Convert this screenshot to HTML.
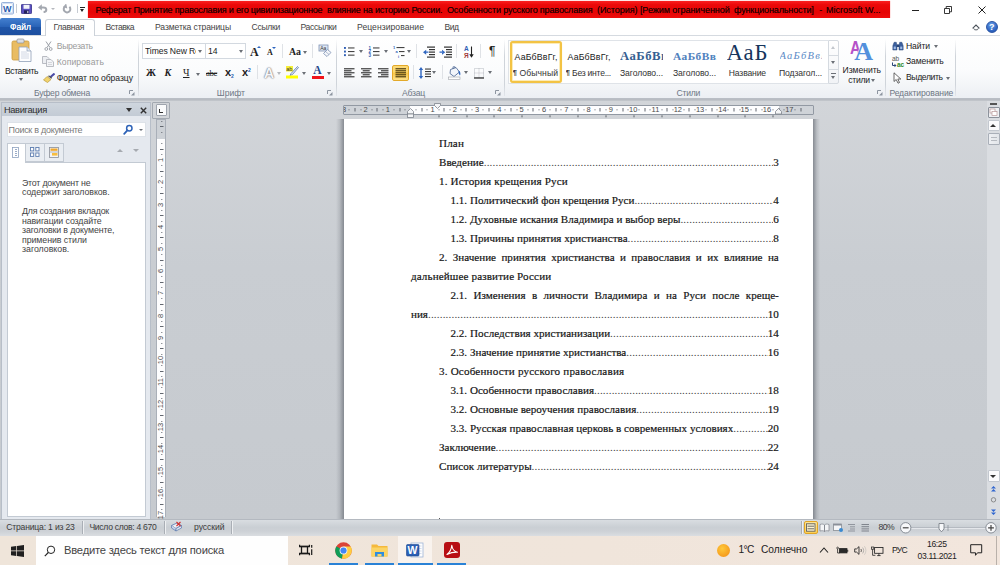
<!DOCTYPE html>
<html lang="ru">
<head>
<meta charset="utf-8">
<title>Реферат - Microsoft Word</title>
<style>
*{box-sizing:border-box;margin:0;padding:0}
html,body{width:1000px;height:565px;overflow:hidden;background:#fff}
body{position:relative;font-family:"Liberation Sans","DejaVu Sans",sans-serif;font-size:8.5px;color:#333;line-height:1}
.a{position:absolute;white-space:nowrap}
/* title bar */
#titlebar{left:0;top:0;width:1000px;height:18px;background:#fff}
#redtitle{left:87.5px;top:1px;width:802px;height:16.5px;background:linear-gradient(#fa2020 0%,#ec0909 22%,#e50404 65%,#ee0c0c 100%);overflow:hidden;box-shadow:0 0 1px rgba(255,60,60,0.8)}
.tt{font-size:9px;color:#210000;text-shadow:0 0 0.4px rgba(40,0,0,0.7)}
/* tabs */
#tabrow{left:0;top:18px;width:1000px;height:18px;background:#fff;border-bottom:1px solid #d5dae0}
.tab{top:5px;font-size:8.6px;color:#444}
#filetab{left:0;top:18px;width:41px;height:17px;background:linear-gradient(#4480d0,#2a64b8 50%,#1f55a8 55%,#1d4f9f);border-radius:2px 3px 0 0;color:#fff;font-size:8.5px;text-align:center;padding-top:4.7px;text-shadow:0 0 0.5px #fff}
#hometab{left:44.5px;top:18.5px;width:50px;height:17.5px;background:#fff;border:1px solid #ccd2d9;border-bottom:none;border-radius:3px 3px 0 0}
/* ribbon */
#ribbon{left:0;top:36px;width:1000px;height:63px;background:linear-gradient(#ffffff 0%,#fbfcfd 55%,#eceff3 100%);border-bottom:1px solid #b9bec5}
.gsep{top:39px;width:1px;height:57px;background:linear-gradient(rgba(200,205,212,0),#cfd4da 30%,#cfd4da 80%,rgba(200,205,212,0.3))}
.glabel{top:88.5px;font-size:8.6px;color:#6e7784;text-align:center}
.rt{font-size:8.6px;color:#333}
.dis{color:#9a9a9a}
.arr{width:0;height:0;border-left:2.5px solid transparent;border-right:2.5px solid transparent;border-top:3px solid #6b6f76}
.combo{background:#fff;border:1px solid #d3d9e0}
.ser{font-family:"Liberation Serif",serif;color:#222}
.vsep{width:1px;height:14px;background:#dfe2e6}
.tri-u{width:0;height:0;border-left:2px solid transparent;border-right:2px solid transparent;border-bottom:2.5px solid #2f66c0}
.tri-d{width:0;height:0;border-left:2px solid transparent;border-right:2px solid transparent;border-top:2.5px solid #2f66c0}
.sp{font-family:"Liberation Sans",sans-serif}
.sl{color:#333}
.pil{font-size:7.5px;color:#333;font-weight:bold;height:8px;overflow:hidden}
/* workspace */
#work{left:0;top:99px;width:1000px;height:420px;background:linear-gradient(#d2d5d9 0%,#c9cdd2 40%,#c6cacf 100%)}
.rn{font-size:7.5px;color:#4a4a4a;text-align:center}
.rnv{font-size:7.5px;color:#4a4a4a;width:12px;height:8px;line-height:8px;text-align:center;transform:rotate(-90deg)}
.nt{font-size:8.8px;color:#444}
#page{left:344px;top:119px;width:469px;height:400px;background:#fff}
.psl{left:336px;top:119px;width:8px;height:400px;background:linear-gradient(90deg,rgba(120,125,133,0),rgba(120,125,133,0.25) 45%,rgba(110,115,123,0.75))}
.psr{left:813px;top:119px;width:7px;height:400px;background:linear-gradient(270deg,rgba(120,125,133,0),rgba(120,125,133,0.25) 45%,rgba(110,115,123,0.75))}
.dl{font-family:"Liberation Serif",serif;font-size:11.1px;line-height:19px;height:19px;color:#141414;-webkit-text-stroke:0.18px #141414}
.dj{text-align:justify;text-align-last:justify;white-space:normal}
.dd{display:flex}
.dd .dots{flex:1 1 0;overflow:hidden;min-width:0;letter-spacing:0.16px;color:#444;-webkit-text-stroke:0}
/* status */
#status{left:0;top:519px;width:1000px;height:16.5px;background:linear-gradient(#d9dde1,#cacfd4 45%,#cdd1d6 70%,#dadde1);border-top:1px solid #b4b9c0;font-size:8.5px;color:#333}
.st{font-size:8.6px;color:#3c3c3c}
.ssep{top:521px;width:1px;height:13px;background:#a9aeb5;box-shadow:1px 0 0 #eef0f2}
.tu{top:563px;height:2px;background:#2a82d6}
/* taskbar */
#taskbar{left:0;top:535.5px;width:1000px;height:29.5px;background:linear-gradient(90deg,#efe5da 0%,#f0e5db 60%,#f2e6dd 100%)}
</style>
</head>
<body>
<!-- TITLEBAR -->
<div class="a" id="titlebar"></div>
<!-- QAT -->
<svg class="a" style="left:1px;top:2px" width="13" height="13" viewBox="0 0 13 13"><rect x="0.5" y="0.5" width="12" height="11.5" rx="1" fill="#eaf1fb" stroke="#7f9fd0" stroke-width="0.8"/><rect x="1.8" y="1.8" width="9.4" height="9" fill="#fff" stroke="#b4c8e8" stroke-width="0.5"/><text x="2" y="10" font-size="9" font-weight="bold" font-family="Liberation Sans, sans-serif" fill="#2a5db0">W</text></svg>
<div class="a" style="left:15.5px;top:4px;width:1px;height:9px;background:#c7ccd3"></div>
<svg class="a" style="left:21px;top:3.5px" width="11" height="10" viewBox="0 0 11 10"><rect x="0.4" y="0.4" width="10.2" height="9.2" rx="0.8" fill="#5a4fc0" stroke="#2d2a80" stroke-width="0.8"/><rect x="2.5" y="0.8" width="6" height="4" fill="#f2f3fa"/><rect x="3" y="6.3" width="5" height="3.3" fill="#23235a"/><rect x="6.2" y="6.9" width="1.2" height="2.2" fill="#d0d0e8"/></svg>
<svg class="a" style="left:38px;top:4px" width="10" height="9" viewBox="0 0 10 9"><path d="M2.5 3.4H5.3C7.4 3.4 8.3 4.6 8.3 5.8C8.3 7.2 7.2 8 5.6 8.1" fill="none" stroke="#a4a8b0" stroke-width="2"/><path d="M0 3.4L3.8 0.2V6.6Z" fill="#a4a8b0"/></svg>
<div class="a arr" style="left:51px;top:7.5px;border-top-color:#b5b8be;border-left-width:2px;border-right-width:2px;border-top-width:2.5px"></div>
<svg class="a" style="left:62px;top:3.5px" width="10" height="10" viewBox="0 0 10 10"><path d="M7.4 2.8A3.3 3.3 0 1 1 3 2.5" fill="none" stroke="#a4a8b0" stroke-width="2"/><path d="M4.8 -0.3V5L1 2.6Z" fill="#a4a8b0" transform="rotate(-12 3 2.5)"/></svg>
<div class="a" style="left:76.5px;top:4px;width:1px;height:9px;background:#c7ccd3"></div>
<div class="a" style="left:80px;top:6.5px;width:5px;height:1px;background:#222"></div>
<div class="a arr" style="left:80px;top:9px;border-top-color:#222"></div>
<div class="a" id="redtitle"></div>
<div class="a tt" style="top:5.7px;left:95.5px;letter-spacing:-0.195px">Реферат Принятие православия и его цивилизационное</div>
<div class="a tt" style="top:5.7px;left:327.0px;letter-spacing:-0.166px">влияние на историю России.</div>
<div class="a tt" style="top:5.7px;left:447.0px;letter-spacing:-0.135px">Особенности русского православия</div>
<div class="a tt" style="top:5.7px;left:597.0px;letter-spacing:-0.049px">(История) [Режим ограниченной</div>
<div class="a tt" style="top:5.7px;left:734.0px;letter-spacing:-0.133px">функциональности]</div>
<div class="a tt" style="top:5.7px;left:819.2px">-</div>
<div class="a tt" style="top:5.7px;left:826.0px;letter-spacing:-0.001px">Microsoft W...</div>
<!-- TABS -->
<div class="a" id="tabrow"></div>
<div class="a" id="filetab">Файл</div>
<div class="a" id="hometab"></div>
<div class="a tab" style="left:53.5px;top:23.4px;letter-spacing:-0.317px">Главная</div>
<div class="a tab" style="left:105.5px;top:23.4px;letter-spacing:-0.493px">Вставка</div>
<div class="a tab" style="left:155.0px;top:23.4px;letter-spacing:-0.116px">Разметка страницы</div>
<div class="a tab" style="left:251.5px;top:23.4px;letter-spacing:-0.294px">Ссылки</div>
<div class="a tab" style="left:300.5px;top:23.4px;letter-spacing:-0.322px">Рассылки</div>
<div class="a tab" style="left:357.0px;top:23.4px;letter-spacing:0.046px">Рецензирование</div>
<div class="a tab" style="left:444.5px;top:23.4px;letter-spacing:-0.516px">Вид</div>
<!-- WINDOW CONTROLS -->
<div class="a" style="left:911.5px;top:9.8px;width:7.2px;height:1px;background:#222"></div>
<svg class="a" style="left:944px;top:6.2px" width="8" height="8" viewBox="0 0 8 8"><path d="M0.5 2.5H5.5V7.5H0.5Z" fill="none" stroke="#222" stroke-width="0.9"/><path d="M2.2 2.5V0.5H7.5V5.8H5.5" fill="none" stroke="#222" stroke-width="0.9"/></svg>
<svg class="a" style="left:977.7px;top:6.2px" width="8" height="8" viewBox="0 0 8 8"><path d="M0.5 0.5L7.5 7.5M7.5 0.5L0.5 7.5" stroke="#222" stroke-width="1"/></svg>
<svg class="a" style="left:972.2px;top:23.7px" width="8" height="7" viewBox="0 0 8 7"><path d="M0.6 4.3L4 1L7.4 4.3" fill="none" stroke="#4a5059" stroke-width="1.1"/><path d="M1.8 4.4C1.2 6.4 6.8 6.4 6.2 4.4" fill="none" stroke="#4a5059" stroke-width="0.9"/></svg>
<div class="a" style="left:985.8px;top:20.8px;width:12px;height:12px;border-radius:50%;background:radial-gradient(circle at 45% 30%,#6aa0e8,#2c62c0 70%,#1e4a9a);border:0.5px solid #2a55a5;color:#fff;font-size:9px;font-weight:bold;text-align:center;line-height:11px">?</div>
<!-- RIBBON -->
<div class="a" id="ribbon"></div>
<!-- group separators -->
<div class="a gsep" style="left:138px"></div>
<div class="a gsep" style="left:336px"></div>
<div class="a gsep" style="left:504px"></div>
<div class="a gsep" style="left:885px"></div>
<div class="a gsep" style="left:955px"></div>
<!-- group labels -->
<div class="a glabel" style="left:34.0px;letter-spacing:-0.201px">Буфер обмена</div>
<div class="a glabel" style="left:216.8px;letter-spacing:-0.006px">Шрифт</div>
<div class="a glabel" style="left:402.0px;letter-spacing:-0.222px">Абзац</div>
<div class="a glabel" style="left:676.6px;letter-spacing:-0.273px">Стили</div>
<div class="a glabel" style="left:889.4px;letter-spacing:-0.112px">Редактирование</div>
<!-- dialog launchers -->
<svg class="a lch" style="left:129px;top:90px" width="6" height="6" viewBox="0 0 6 6"><path d="M0.5 4V0.5H4" fill="none" stroke="#8d95a0" stroke-width="1"/><path d="M2 5.5H5.5V2Z" fill="#8d95a0"/></svg>
<svg class="a lch" style="left:327px;top:90px" width="6" height="6" viewBox="0 0 6 6"><path d="M0.5 4V0.5H4" fill="none" stroke="#8d95a0" stroke-width="1"/><path d="M2 5.5H5.5V2Z" fill="#8d95a0"/></svg>
<svg class="a lch" style="left:495px;top:90px" width="6" height="6" viewBox="0 0 6 6"><path d="M0.5 4V0.5H4" fill="none" stroke="#8d95a0" stroke-width="1"/><path d="M2 5.5H5.5V2Z" fill="#8d95a0"/></svg>
<svg class="a lch" style="left:877px;top:90px" width="6" height="6" viewBox="0 0 6 6"><path d="M0.5 4V0.5H4" fill="none" stroke="#8d95a0" stroke-width="1"/><path d="M2 5.5H5.5V2Z" fill="#8d95a0"/></svg>
<!-- CLIPBOARD GROUP -->
<svg class="a" style="left:10.3px;top:38.3px" width="24" height="25" viewBox="0 0 24 25">
 <rect x="2" y="3" width="17" height="19" rx="1.5" fill="#e9bc62" stroke="#c99a3e" stroke-width="0.8"/>
 <rect x="7" y="1" width="7" height="4" rx="1" fill="#d9dde3" stroke="#8c8f96" stroke-width="0.7"/>
 <path d="M9 9H17L21 13V23.5H9Z" fill="#fdfdfe" stroke="#8fa0b8" stroke-width="0.8"/>
 <path d="M17 9V13H21" fill="#e4e9f1" stroke="#8fa0b8" stroke-width="0.7"/>
 <path d="M11 14H17M11 16H19M11 18H19M11 20H19" stroke="#c6cede" stroke-width="0.8"/>
</svg>
<div class="a rt" style="left:5.0px;top:66.5px;color:#222;letter-spacing:-0.430px">Вставить</div>
<div class="a arr" style="left:19px;top:78px"></div>
<svg class="a" style="left:44px;top:41px" width="9" height="10" viewBox="0 0 9 10"><path d="M2 0.5L6 6.5M7 0.5L3 6.5" stroke="#9a9ea6" stroke-width="1" fill="none"/><circle cx="2.3" cy="8" r="1.4" fill="none" stroke="#9a9ea6" stroke-width="0.9"/><circle cx="6.7" cy="8" r="1.4" fill="none" stroke="#9a9ea6" stroke-width="0.9"/></svg>
<div class="a rt dis" style="left:56.7px;top:42px;letter-spacing:-0.267px">Вырезать</div>
<svg class="a" style="left:42px;top:56px" width="12" height="11" viewBox="0 0 12 11"><path d="M0.5 0.5H5L7 2.5V7.5H0.5Z" fill="#eceef2" stroke="#a9adb5" stroke-width="0.8"/><path d="M4.5 3.5H9L11.5 6V10.5H4.5Z" fill="#f3f4f7" stroke="#a9adb5" stroke-width="0.8"/><path d="M6 6.5H10M6 8.5H10" stroke="#c6c9cf" stroke-width="0.7"/></svg>
<div class="a rt dis" style="left:56.7px;top:57.5px;letter-spacing:0.102px">Копировать</div>
<svg class="a" style="left:43px;top:73px" width="12" height="10" viewBox="0 0 12 10"><path d="M11.5 0.5L7 4.5" stroke="#4a4aa8" stroke-width="2"/><path d="M4 3.5L8 6.5L4.5 9.5L0.5 7Z" fill="#f1d36d" stroke="#b99a3a" stroke-width="0.7"/><path d="M5.5 2.8L8.8 5.2" stroke="#555" stroke-width="1.4"/></svg>
<div class="a rt" style="left:56.7px;top:73.5px;color:#222;letter-spacing:-0.045px">Формат по образцу</div>
<!-- FONT GROUP -->
<div class="a combo" style="left:142px;top:43px;width:64px;height:16px"></div>
<div class="a combo" style="left:205px;top:43px;width:41px;height:16px"></div>
<div class="a rt" style="left:145px;top:46.5px;color:#222;width:51px;overflow:hidden;letter-spacing:-0.1px">Times New Ro</div>
<div class="a rt" style="left:208px;top:46.5px;color:#222">14</div>
<div class="a arr" style="left:198px;top:50px"></div>
<div class="a arr" style="left:239px;top:50px"></div>
<div class="a ser" style="left:250px;top:46.2px;font-size:12px;font-weight:bold">A</div>
<div class="a tri-u" style="left:257px;top:46px"></div>
<div class="a ser" style="left:267px;top:49px;font-size:8px;font-weight:bold">A</div>
<div class="a tri-d" style="left:272px;top:47px"></div>
<div class="a vsep" style="left:282px;top:44px"></div>
<div class="a ser" style="left:289px;top:46.5px;font-size:9.8px;font-weight:bold">Aa</div>
<div class="a arr" style="left:302.5px;top:50.5px"></div>
<div class="a vsep" style="left:312px;top:44px"></div>
<svg class="a" style="left:318px;top:44px" width="14" height="14" viewBox="0 0 14 14"><rect x="1" y="1" width="9" height="6" fill="#dfe7f3" stroke="#7f93b5" stroke-width="0.8"/><text x="2.2" y="6" font-size="5" font-family="Liberation Sans, sans-serif" fill="#333">Aa</text><path d="M9.5 5.5L13 8.5L9 12.5L5.5 9.5Z" fill="#f4f6fa" stroke="#7f93b5" stroke-width="0.8"/><path d="M7.5 7.5L11 10.5" stroke="#7f93b5" stroke-width="0.6"/></svg>
<!-- row 2 -->
<div class="a ser" style="left:146px;top:68px;font-size:10px;font-weight:bold">Ж</div>
<div class="a ser" style="left:164.5px;top:68px;font-size:10px;font-weight:bold;font-style:italic">К</div>
<div class="a ser" style="left:183px;top:68px;font-size:10px;text-decoration:underline">Ч</div>
<div class="a arr" style="left:196px;top:72.5px"></div>
<div class="a ser" style="left:206px;top:68.7px;font-size:8.8px;text-decoration:line-through;letter-spacing:-0.35px">abc</div>
<div class="a" style="left:225px;top:67.3px;font-size:11px;font-weight:bold;color:#222">x</div>
<div class="a" style="left:231px;top:73.5px;font-size:5px;font-weight:bold;color:#2a5db0">2</div>
<div class="a" style="left:242px;top:67.3px;font-size:11px;font-weight:bold;color:#222">x</div>
<div class="a" style="left:248px;top:67.5px;font-size:5px;font-weight:bold;color:#2a5db0">2</div>
<div class="a vsep" style="left:257px;top:65px"></div>
<div class="a" style="left:264px;top:65.5px;font-size:14px;font-weight:bold;color:#f6f6f8;text-shadow:0 0 1.2px #77777f,0 0 1.2px #8a8a92,0 0 2px #b5b5bb">A</div>
<div class="a arr" style="left:277px;top:72px;border-top-color:#b5b8be"></div>
<svg class="a" style="left:286px;top:66px" width="13" height="13" viewBox="0 0 13 13"><rect x="0" y="0" width="7" height="5.5" fill="#f6ef3a"/><text x="0.3" y="4.8" font-size="5.5" font-family="Liberation Sans, sans-serif" fill="#333">ab</text><path d="M11.5 0.5L5 7.5L4 9.5L6.5 8.5L12.5 1.5Z" fill="#dfe7f3" stroke="#5a78ad" stroke-width="0.8"/><rect x="0" y="9.5" width="12" height="3" fill="#ffff00"/></svg>
<div class="a arr" style="left:302px;top:72px"></div>
<div class="a ser" style="left:313.3px;top:64.8px;font-size:11.5px;font-weight:bold;color:#24468a">A</div>
<div class="a" style="left:311.5px;top:75.5px;width:12px;height:3px;background:#f0141a"></div>
<div class="a arr" style="left:327px;top:72px"></div>
<!-- PARAGRAPH GROUP -->
<svg class="a" style="left:343px;top:45px" width="160" height="14" viewBox="0 0 160 14">
 <!-- bullets -->
 <g fill="#2f5fb5"><rect x="1" y="2" width="1.9" height="1.9"/><rect x="1" y="5.6" width="1.9" height="1.9"/><rect x="1" y="9.2" width="1.9" height="1.9"/></g>
 <g fill="#444"><rect x="5" y="2.4" width="6.5" height="1.1"/><rect x="5" y="6" width="6.5" height="1.1"/><rect x="5" y="9.6" width="6.5" height="1.1"/></g>
 <!-- numbering -->
 <g fill="#2f5fb5" font-size="4.5" font-family="Liberation Sans, sans-serif" font-weight="bold"><text x="25.5" y="4.6">1</text><text x="25.5" y="8.2">2</text><text x="25.5" y="11.8">3</text></g>
 <g fill="#444"><rect x="30" y="2.4" width="6.5" height="1.1"/><rect x="30" y="6" width="6.5" height="1.1"/><rect x="30" y="9.6" width="6.5" height="1.1"/></g>
 <!-- multilevel -->
 <g fill="#2f5fb5" font-size="4" font-family="Liberation Sans, sans-serif" font-weight="bold"><text x="50" y="4">1</text><text x="52.5" y="8">a</text><text x="55" y="12.5">i</text></g>
 <g fill="#444"><rect x="53.5" y="2" width="8" height="1.1"/><rect x="56" y="6" width="5.5" height="1.1"/><rect x="58" y="10" width="3.5" height="1.1"/></g>
 <!-- decrease indent -->
 <g fill="#333"><rect x="84" y="1.5" width="8" height="1.2"/><rect x="86" y="4" width="6" height="1.2"/><rect x="86" y="6.5" width="6" height="1.2"/><rect x="86" y="9" width="6" height="1.2"/><rect x="84" y="11.5" width="8" height="1.2"/></g>
 <path d="M80 7.2L83.2 4.7V9.7Z M83 6.6H85.5V7.8H83Z" fill="#2f66c0"/>
 <!-- increase indent -->
 <g fill="#333"><rect x="101" y="1.5" width="8" height="1.2"/><rect x="103" y="4" width="6" height="1.2"/><rect x="103" y="6.5" width="6" height="1.2"/><rect x="103" y="9" width="6" height="1.2"/><rect x="101" y="11.5" width="8" height="1.2"/></g>
 <path d="M102.2 7.2L99 4.7V9.7Z M96.5 6.6H99.2V7.8H96.5Z" fill="#2f66c0"/>
 <!-- sort -->
 <text x="121" y="6.2" font-size="6.5" font-family="Liberation Sans, sans-serif" font-weight="bold" fill="#2f5fb5">А</text>
 <text x="121" y="12.8" font-size="6.5" font-family="Liberation Sans, sans-serif" font-weight="bold" fill="#a03a3a">Я</text>
 <path d="M128.5 1.5V10.5" stroke="#222" stroke-width="1.1"/><path d="M126.3 9.3L128.5 12.8L130.7 9.3Z" fill="#222"/>
</svg>
<div class="a arr" style="left:358.5px;top:50px"></div>
<div class="a arr" style="left:384px;top:50px"></div>
<div class="a arr" style="left:406.5px;top:50px"></div>
<div class="a vsep" style="left:416px;top:44px"></div>
<div class="a vsep" style="left:456px;top:44px"></div>
<div class="a vsep" style="left:480px;top:44px"></div>
<div class="a" style="left:489px;top:45px;font-size:12px;color:#222">¶</div>
<!-- row2 -->
<div class="a" style="left:392px;top:65px;width:17px;height:16px;border:1px solid #e3a929;border-radius:2px;background:linear-gradient(#fbd977,#ffd766 45%,#f9c646 50%,#fce08a)"></div>
<svg class="a" style="left:343px;top:66px" width="160" height="14" viewBox="0 0 160 14">
 <g fill="#333"><rect x="1" y="2.2" width="10.5" height="1.15"/><rect x="1" y="4.2" width="7.5" height="1.15"/><rect x="1" y="6.2" width="10.5" height="1.15"/><rect x="1" y="8.2" width="7.5" height="1.15"/><rect x="1" y="10.2" width="10.5" height="1.15"/><rect x="18" y="2.2" width="10.5" height="1.15"/><rect x="19.7" y="4.2" width="7" height="1.15"/><rect x="18" y="6.2" width="10.5" height="1.15"/><rect x="19.7" y="8.2" width="7" height="1.15"/><rect x="18" y="10.2" width="10.5" height="1.15"/><rect x="35" y="2.2" width="10.5" height="1.15"/><rect x="38" y="4.2" width="7.5" height="1.15"/><rect x="35" y="6.2" width="10.5" height="1.15"/><rect x="38" y="8.2" width="7.5" height="1.15"/><rect x="35" y="10.2" width="10.5" height="1.15"/></g><g fill="#4a3a10"><rect x="52.5" y="2.2" width="10.5" height="1.15"/><rect x="52.5" y="4.2" width="10.5" height="1.15"/><rect x="52.5" y="6.2" width="10.5" height="1.15"/><rect x="52.5" y="8.2" width="10.5" height="1.15"/><rect x="52.5" y="10.2" width="10.5" height="1.15"/></g>
 <!-- line spacing -->
 <path d="M78 1L75.8 4H77.3V10H75.8L78 13L80.2 10H78.7V4H80.2Z" fill="#2f66c0"/>
 <g fill="#3a3a3a"><rect x="82" y="2.5" width="6" height="1.1"/><rect x="82" y="5" width="6" height="1.1"/><rect x="82" y="7.5" width="6" height="1.1"/><rect x="82" y="10" width="6" height="1.1"/></g>
 <!-- shading -->
 <path d="M107.5 3.5L113 1.5L116.5 6L111 10.5L107 7.5Z" fill="#f2f5fa" stroke="#44608f" stroke-width="0.8"/><path d="M110 3V0.8H112V2.2" fill="none" stroke="#44608f" stroke-width="0.7"/><path d="M115.5 4.5C117.5 5.5 117.8 8 117 9.5C116 8.5 115.5 7 115.5 4.5Z" fill="#2f66c0"/>
 <rect x="105.5" y="11" width="11.5" height="2.3" fill="#fdfdfd" stroke="#a0a4ab" stroke-width="0.6"/>
 <!-- borders -->
 <rect x="131.5" y="2.5" width="9" height="9" fill="none" stroke="#9a9ea6" stroke-width="0.7" stroke-dasharray="1 1"/><path d="M136 2.5V11.5M131.5 7H140.5" stroke="#9a9ea6" stroke-width="0.6" stroke-dasharray="1 1"/><path d="M131 12H141" stroke="#222" stroke-width="1.2"/>
</svg>
<div class="a vsep" style="left:413px;top:65px"></div>
<div class="a arr" style="left:431.5px;top:71px"></div>
<div class="a vsep" style="left:442px;top:65px"></div>
<div class="a arr" style="left:463.5px;top:71px"></div>
<div class="a arr" style="left:487.5px;top:71px"></div>
<!-- STYLES GROUP -->
<div class="a" style="left:508px;top:40px;width:320px;height:44px;background:#fff;border:1px solid #dfe3e8;border-right:none"></div>
<div class="a" style="left:509.5px;top:41px;width:52.5px;height:42px;border:2px solid #f3c344;border-radius:3px;background:#fff;box-shadow:inset 0 0 0 1px #fcecb8,0 0 1px #f6d98f"></div>
<div class="a sp" style="left:514.5px;top:52.5px;font-size:8.8px;color:#222;letter-spacing:0.160px">АаБбВвГг,</div>
<div class="a sp" style="left:567.5px;top:52.5px;font-size:8.8px;color:#222;letter-spacing:0.160px">АаБбВвГг,</div>
<div class="a ser" style="left:620px;top:49.6px;font-size:12.7px;font-weight:bold;color:#365f91;width:42.5px;overflow:hidden;letter-spacing:0.5px">АаБбВв</div>
<div class="a ser" style="left:673px;top:50.6px;font-size:11.4px;font-weight:bold;color:#4f81bd;width:43.8px;overflow:hidden;letter-spacing:0.44px">АаБбВвГ</div>
<div class="a ser" style="left:726.5px;top:41.5px;font-size:22.7px;color:#17365d;width:42px;height:22px;overflow:hidden;letter-spacing:0.93px">АаБ</div>
<div class="a ser" style="left:779.5px;top:50.8px;font-size:10.5px;font-style:italic;color:#5b8ac6;letter-spacing:1.25px;width:42.5px;overflow:hidden">АаБбВвГ</div>
<div class="a pil" style="left:512.8px;top:69px">¶</div>
<div class="a rt sl" style="left:519.6px;top:68.5px;letter-spacing:0.059px">Обычный</div>
<div class="a pil" style="left:565.8px;top:69px">¶</div>
<div class="a rt sl" style="left:572.1px;top:68.5px;letter-spacing:-0.272px">Без инте...</div>
<div class="a rt sl" style="left:620.0px;top:68.5px;letter-spacing:-0.074px">Заголово...</div>
<div class="a rt sl" style="left:673.0px;top:68.5px;letter-spacing:-0.074px">Заголово...</div>
<div class="a rt sl" style="left:728.8px;top:68.5px;letter-spacing:-0.163px">Название</div>
<div class="a rt sl" style="left:779.0px;top:68.5px;letter-spacing:-0.111px">Подзагол...</div>
<!-- gallery scroll -->
<div class="a" style="left:828px;top:40px;width:11px;height:44px;border:1px solid #d5dae0;background:linear-gradient(#fff,#f1f3f6);border-radius:0 2px 2px 0"></div>
<div class="a" style="left:829px;top:54.5px;width:9px;height:1px;background:#d5dae0"></div>
<div class="a" style="left:829px;top:69px;width:9px;height:1px;background:#d5dae0"></div>
<div class="a" style="left:831px;top:46px;width:0;height:0;border-left:2.5px solid transparent;border-right:2.5px solid transparent;border-bottom:3px solid #c3c7cd"></div>
<div class="a arr" style="left:831px;top:61px"></div>
<div class="a" style="left:831px;top:73px;width:5px;height:1px;background:#6b6f76"></div>
<div class="a arr" style="left:831px;top:76px"></div>
<!-- change styles -->
<div class="a" style="left:850.4px;top:38.8px;font-size:18.8px;font-weight:bold;color:#b652c8;transform:scaleX(0.8);transform-origin:0 0">A</div>
<div class="a ser" style="left:854.3px;top:38.9px;font-size:26px;font-weight:bold;color:#5390dc;text-shadow:0 0 1px #fff,0 0 1px #fff">A</div>
<div class="a rt" style="left:842.5px;top:66px;color:#222;letter-spacing:-0.033px">Изменить</div>
<div class="a rt" style="left:848.2px;top:75.5px;color:#222;letter-spacing:-0.272px">стили</div>
<div class="a arr" style="left:871px;top:79px"></div>
<!-- EDITING GROUP -->
<svg class="a" style="left:891.7px;top:40.6px" width="12" height="10.3" viewBox="0 0 14 12"><path d="M1 5.5L2.5 1.5H5L5.8 5.5V10.5H1Z M8.2 5.5L9 1.5H11.5L13 5.5V10.5H8.2Z" fill="#3b5f9e" stroke="#2a4678" stroke-width="0.6"/><rect x="5.5" y="4" width="3" height="3" fill="#2a4678"/><rect x="2" y="6.5" width="2.5" height="3" fill="#9db9e6"/><rect x="9.5" y="6.5" width="2.5" height="3" fill="#9db9e6"/></svg>
<div class="a rt" style="left:906.0px;top:41.6px;color:#222;letter-spacing:-0.106px">Найти</div>
<div class="a arr" style="left:933.5px;top:44.5px"></div>
<svg class="a" style="left:891px;top:55px" width="15" height="13" viewBox="0 0 15 13"><text x="1" y="5.5" font-size="6.5" font-family="Liberation Sans, sans-serif" fill="#555">ab</text><text x="6" y="12" font-size="6.5" font-weight="bold" font-family="Liberation Sans, sans-serif" fill="#2d8a2d">ac</text><path d="M1.5 7.5V10.5H4.5" fill="none" stroke="#2a4678" stroke-width="1"/><path d="M3.5 8.8L5.5 10.5L3.5 12.2Z" fill="#2a4678"/></svg>
<div class="a rt" style="left:906.0px;top:57.2px;color:#222;letter-spacing:-0.128px">Заменить</div>
<svg class="a" style="left:893px;top:72px" width="10" height="12" viewBox="0 0 10 12"><path d="M1 0.8V9.5L3.2 7.5L5 11.2L6.5 10.5L4.8 7H7.8Z" fill="#fff" stroke="#444" stroke-width="0.8"/></svg>
<div class="a rt" style="left:906.0px;top:73.1px;color:#222;letter-spacing:-0.382px">Выделить</div>
<div class="a arr" style="left:945.5px;top:77px"></div>
<!-- WORKSPACE -->
<div class="a" id="work"></div>
<div class="a" style="left:0;top:99px;width:1000px;height:2px;background:linear-gradient(#b4b8be,#c4c8cd)"></div>
<!-- NAV PANE -->
<div class="a" style="left:1px;top:101.5px;width:150px;height:417.5px;background:#e5e9ef;border:1px solid #b7bec8;border-bottom:none"></div>
<div class="a" style="left:2px;top:102.5px;width:148px;height:13.2px;background:linear-gradient(#cfd6de,#c3cbd5)"></div>
<div class="a" style="left:3.9px;top:106px;font-size:9.3px;color:#2e2e2e;letter-spacing:-0.326px">Навигация</div>
<div class="a" style="left:126.3px;top:108.2px;width:0;height:0;border-left:3.6px solid transparent;border-right:3.6px solid transparent;border-top:4px solid #333"></div>
<svg class="a" style="left:139.5px;top:107px" width="7" height="7" viewBox="0 0 7 7"><path d="M0.8 0.8L6.2 6.2M6.2 0.8L0.8 6.2" stroke="#333" stroke-width="1.4"/></svg>
<div class="a" style="left:6.5px;top:121.5px;width:139px;height:15.5px;background:#fff;border:1px solid #dde2e8"></div>
<div class="a" style="left:8.5px;top:125.5px;font-size:9px;color:#7a7a7a;letter-spacing:-0.283px">Поиск в документе</div>
<svg class="a" style="left:123px;top:124px" width="11" height="11" viewBox="0 0 11 11"><circle cx="6.3" cy="4.2" r="2.7" fill="#fff" stroke="#2e63b8" stroke-width="1.5"/><path d="M4.3 6.4L1.2 9.8" stroke="#2e63b8" stroke-width="1.8" stroke-linecap="round"/></svg>
<div class="a arr" style="left:138.5px;top:128.5px;border-left-width:2px;border-right-width:2px;border-top-width:2.5px"></div>
<!-- nav tabs -->
<div class="a" style="left:25px;top:142.7px;width:20px;height:19.8px;background:#e9edf2;border:1px solid #c3cad3"></div>
<div class="a" style="left:44px;top:142.7px;width:20px;height:19.8px;background:#e9edf2;border:1px solid #c3cad3"></div>
<div class="a" style="left:6.5px;top:162px;width:139.5px;height:355px;background:#fff;border:1px solid #c3cad3"></div>
<div class="a" style="left:6.5px;top:142.7px;width:19px;height:20.8px;background:#fff;border:1px solid #c3cad3;border-bottom:none"></div>
<svg class="a" style="left:11px;top:145.5px" width="10" height="13" viewBox="0 0 10 13"><rect x="1.5" y="1.5" width="6" height="10" fill="#fff" stroke="#8ea2c0" stroke-width="0.8"/><path d="M4 3.5H6M4 5.5H6M4 7.5H6M4 9.5H6" stroke="#6e86ad" stroke-width="0.7"/></svg>
<svg class="a" style="left:29px;top:145.7px" width="12" height="12" viewBox="0 0 12 12"><g fill="#fff" stroke="#5d7db0" stroke-width="0.9"><rect x="1.5" y="1.5" width="3.2" height="3.4"/><rect x="6.8" y="1.5" width="3.2" height="3.4"/><rect x="1.5" y="7" width="3.2" height="3.4"/><rect x="6.8" y="7" width="3.2" height="3.4"/></g></svg>
<svg class="a" style="left:48px;top:145.7px" width="12" height="13" viewBox="0 0 12 13"><rect x="1.5" y="1.5" width="9" height="10" fill="#f2f4f7" stroke="#8a8f98" stroke-width="0.8"/><rect x="2.5" y="2.5" width="7" height="2.3" fill="#f0a72c"/><rect x="4" y="7" width="5.5" height="2.6" fill="#f7bd3f"/><path d="M2 6H10" stroke="#8a8f98" stroke-width="0.6"/></svg>
<div class="a" style="left:117.4px;top:149.2px;width:0;height:0;border-left:3.7px solid transparent;border-right:3.7px solid transparent;border-bottom:3.8px solid #a6aab0"></div>
<div class="a" style="left:133.3px;top:149.3px;width:0;height:0;border-left:3.7px solid transparent;border-right:3.7px solid transparent;border-top:3.8px solid #a6aab0"></div>
<div class="a nt" style="left:22.0px;top:178.5px;letter-spacing:-0.208px">Этот документ не</div>
<div class="a nt" style="left:22.0px;top:188px;letter-spacing:-0.059px">содержит заголовков.</div>
<div class="a nt" style="left:22.0px;top:207px;letter-spacing:-0.198px">Для создания вкладок</div>
<div class="a nt" style="left:22.0px;top:216.5px;letter-spacing:-0.103px">навигации создайте</div>
<div class="a nt" style="left:22.0px;top:226px;letter-spacing:-0.128px">заголовки в документе,</div>
<div class="a nt" style="left:22.0px;top:235.5px;letter-spacing:-0.071px">применив стили</div>
<div class="a nt" style="left:22.0px;top:245px;letter-spacing:-0.010px">заголовков.</div>
<!-- V RULER -->
<div class="a" style="left:152px;top:101.5px;width:17.5px;height:17.5px;border:1px solid #a3a9b1;border-radius:1px"></div>
<div class="a" style="left:155.5px;top:104px;width:11px;height:11.5px;background:#fafbfc;border:1px solid #9ea4ad;border-radius:1px"></div>
<div class="a" style="left:158.5px;top:108.6px;width:4.6px;height:4.4px;border-left:1.7px solid #333;border-bottom:1.7px solid #333"></div>
<div class="a" style="left:155.5px;top:118.5px;width:10.5px;height:398.5px;background:#fdfdfe;border:1px solid #a9afb8;border-bottom:none"></div>
<div class="a" style="left:156.5px;top:119.5px;width:8.5px;height:19.5px;background:#cdd1d6"></div>
<svg class="a" style="left:156.5px;top:118px" width="10" height="399" viewBox="0 0 10 399"><rect x="4.3" y="3" width="1" height="1" fill="#62676f"/><rect x="3" y="8" width="3.5" height="1" fill="#62676f"/><rect x="4.3" y="14" width="1" height="1" fill="#62676f"/><rect x="4.3" y="25" width="1" height="1" fill="#62676f"/><rect x="3" y="31" width="3.5" height="1" fill="#62676f"/><rect x="4.3" y="36" width="1" height="1" fill="#62676f"/><rect x="4.3" y="47" width="1" height="1" fill="#62676f"/><rect x="3" y="53" width="3.5" height="1" fill="#62676f"/><rect x="4.3" y="58" width="1" height="1" fill="#62676f"/><rect x="4.3" y="69" width="1" height="1" fill="#62676f"/><rect x="3" y="75" width="3.5" height="1" fill="#62676f"/><rect x="4.3" y="81" width="1" height="1" fill="#62676f"/><rect x="4.3" y="92" width="1" height="1" fill="#62676f"/><rect x="3" y="97" width="3.5" height="1" fill="#62676f"/><rect x="4.3" y="103" width="1" height="1" fill="#62676f"/><rect x="4.3" y="114" width="1" height="1" fill="#62676f"/><rect x="3" y="119" width="3.5" height="1" fill="#62676f"/><rect x="4.3" y="125" width="1" height="1" fill="#62676f"/><rect x="4.3" y="136" width="1" height="1" fill="#62676f"/><rect x="3" y="142" width="3.5" height="1" fill="#62676f"/><rect x="4.3" y="147" width="1" height="1" fill="#62676f"/><rect x="4.3" y="158" width="1" height="1" fill="#62676f"/><rect x="3" y="164" width="3.5" height="1" fill="#62676f"/><rect x="4.3" y="169" width="1" height="1" fill="#62676f"/><rect x="4.3" y="180" width="1" height="1" fill="#62676f"/><rect x="3" y="186" width="3.5" height="1" fill="#62676f"/><rect x="4.3" y="192" width="1" height="1" fill="#62676f"/><rect x="4.3" y="203" width="1" height="1" fill="#62676f"/><rect x="3" y="208" width="3.5" height="1" fill="#62676f"/><rect x="4.3" y="214" width="1" height="1" fill="#62676f"/><rect x="4.3" y="225" width="1" height="1" fill="#62676f"/><rect x="3" y="230" width="3.5" height="1" fill="#62676f"/><rect x="4.3" y="236" width="1" height="1" fill="#62676f"/><rect x="4.3" y="247" width="1" height="1" fill="#62676f"/><rect x="3" y="253" width="3.5" height="1" fill="#62676f"/><rect x="4.3" y="258" width="1" height="1" fill="#62676f"/><rect x="4.3" y="269" width="1" height="1" fill="#62676f"/><rect x="3" y="275" width="3.5" height="1" fill="#62676f"/><rect x="4.3" y="280" width="1" height="1" fill="#62676f"/><rect x="4.3" y="291" width="1" height="1" fill="#62676f"/><rect x="3" y="297" width="3.5" height="1" fill="#62676f"/><rect x="4.3" y="303" width="1" height="1" fill="#62676f"/><rect x="4.3" y="314" width="1" height="1" fill="#62676f"/><rect x="3" y="319" width="3.5" height="1" fill="#62676f"/><rect x="4.3" y="325" width="1" height="1" fill="#62676f"/><rect x="4.3" y="336" width="1" height="1" fill="#62676f"/><rect x="3" y="341" width="3.5" height="1" fill="#62676f"/><rect x="4.3" y="347" width="1" height="1" fill="#62676f"/><rect x="4.3" y="358" width="1" height="1" fill="#62676f"/><rect x="3" y="364" width="3.5" height="1" fill="#62676f"/><rect x="4.3" y="369" width="1" height="1" fill="#62676f"/><rect x="4.3" y="380" width="1" height="1" fill="#62676f"/><rect x="3" y="386" width="3.5" height="1" fill="#62676f"/><rect x="4.3" y="391" width="1" height="1" fill="#62676f"/></svg>
<div class="a rnv" style="left:155px;top:156.2px">1</div>
<div class="a rnv" style="left:155px;top:178.4px">2</div>
<div class="a rnv" style="left:155px;top:200.6px">3</div>
<div class="a rnv" style="left:155px;top:222.8px">4</div>
<div class="a rnv" style="left:155px;top:245.0px">5</div>
<div class="a rnv" style="left:155px;top:267.2px">6</div>
<div class="a rnv" style="left:155px;top:289.4px">7</div>
<div class="a rnv" style="left:155px;top:311.6px">8</div>
<div class="a rnv" style="left:155px;top:333.8px">9</div>
<div class="a rnv" style="left:155px;top:356.0px">10</div>
<div class="a rnv" style="left:155px;top:378.2px">11</div>
<div class="a rnv" style="left:155px;top:400.4px">12</div>
<div class="a rnv" style="left:155px;top:422.6px">13</div>
<div class="a rnv" style="left:155px;top:444.8px">14</div>
<div class="a rnv" style="left:155px;top:467.0px">15</div>
<div class="a rnv" style="left:155px;top:489.2px">16</div>
<div class="a rnv" style="left:155px;top:511.4px">17</div>
<!-- H RULER -->
<div class="a" style="left:343px;top:105px;width:471px;height:10px;background:#fdfdfe;border:1px solid #9299a3;border-radius:1px"></div>
<div class="a" style="left:344px;top:106px;width:66px;height:8px;background:#cfd3d8"></div>
<div class="a" style="left:779px;top:106px;width:34px;height:8px;background:#cfd3d8"></div>
<svg class="a" style="left:342.5px;top:105px" width="471" height="13" viewBox="0 0 471 13"><rect x="5.5" y="4.3" width="1" height="1" fill="#62676f"/><rect x="11.5" y="3" width="1" height="3.5" fill="#62676f"/><rect x="17.5" y="4.3" width="1" height="1" fill="#62676f"/><rect x="28.5" y="4.3" width="1" height="1" fill="#62676f"/><rect x="33.5" y="3" width="1" height="3.5" fill="#62676f"/><rect x="39.5" y="4.3" width="1" height="1" fill="#62676f"/><rect x="50.5" y="4.3" width="1" height="1" fill="#62676f"/><rect x="56.5" y="3" width="1" height="3.5" fill="#62676f"/><rect x="61.5" y="4.3" width="1" height="1" fill="#62676f"/><rect x="72.5" y="4.3" width="1" height="1" fill="#62676f"/><rect x="78.5" y="3" width="1" height="3.5" fill="#62676f"/><rect x="83.5" y="4.3" width="1" height="1" fill="#62676f"/><rect x="95.5" y="4.3" width="1" height="1" fill="#62676f"/><rect x="100.5" y="3" width="1" height="3.5" fill="#62676f"/><rect x="106.5" y="4.3" width="1" height="1" fill="#62676f"/><rect x="117.5" y="4.3" width="1" height="1" fill="#62676f"/><rect x="122.5" y="3" width="1" height="3.5" fill="#62676f"/><rect x="128.5" y="4.3" width="1" height="1" fill="#62676f"/><rect x="139.5" y="4.3" width="1" height="1" fill="#62676f"/><rect x="145.5" y="3" width="1" height="3.5" fill="#62676f"/><rect x="150.5" y="4.3" width="1" height="1" fill="#62676f"/><rect x="161.5" y="4.3" width="1" height="1" fill="#62676f"/><rect x="167.5" y="3" width="1" height="3.5" fill="#62676f"/><rect x="173.5" y="4.3" width="1" height="1" fill="#62676f"/><rect x="184.5" y="4.3" width="1" height="1" fill="#62676f"/><rect x="189.5" y="3" width="1" height="3.5" fill="#62676f"/><rect x="195.5" y="4.3" width="1" height="1" fill="#62676f"/><rect x="206.5" y="4.3" width="1" height="1" fill="#62676f"/><rect x="212.5" y="3" width="1" height="3.5" fill="#62676f"/><rect x="217.5" y="4.3" width="1" height="1" fill="#62676f"/><rect x="228.5" y="4.3" width="1" height="1" fill="#62676f"/><rect x="234.5" y="3" width="1" height="3.5" fill="#62676f"/><rect x="240.5" y="4.3" width="1" height="1" fill="#62676f"/><rect x="251.5" y="4.3" width="1" height="1" fill="#62676f"/><rect x="256.5" y="3" width="1" height="3.5" fill="#62676f"/><rect x="262.5" y="4.3" width="1" height="1" fill="#62676f"/><rect x="273.5" y="4.3" width="1" height="1" fill="#62676f"/><rect x="279.5" y="3" width="1" height="3.5" fill="#62676f"/><rect x="284.5" y="4.3" width="1" height="1" fill="#62676f"/><rect x="295.5" y="4.3" width="1" height="1" fill="#62676f"/><rect x="301.5" y="3" width="1" height="3.5" fill="#62676f"/><rect x="306.5" y="4.3" width="1" height="1" fill="#62676f"/><rect x="318.5" y="4.3" width="1" height="1" fill="#62676f"/><rect x="323.5" y="3" width="1" height="3.5" fill="#62676f"/><rect x="329.5" y="4.3" width="1" height="1" fill="#62676f"/><rect x="340.5" y="4.3" width="1" height="1" fill="#62676f"/><rect x="345.5" y="3" width="1" height="3.5" fill="#62676f"/><rect x="351.5" y="4.3" width="1" height="1" fill="#62676f"/><rect x="362.5" y="4.3" width="1" height="1" fill="#62676f"/><rect x="368.5" y="3" width="1" height="3.5" fill="#62676f"/><rect x="373.5" y="4.3" width="1" height="1" fill="#62676f"/><rect x="384.5" y="4.3" width="1" height="1" fill="#62676f"/><rect x="390.5" y="3" width="1" height="3.5" fill="#62676f"/><rect x="396.5" y="4.3" width="1" height="1" fill="#62676f"/><rect x="407.5" y="4.3" width="1" height="1" fill="#62676f"/><rect x="412.5" y="3" width="1" height="3.5" fill="#62676f"/><rect x="418.5" y="4.3" width="1" height="1" fill="#62676f"/><rect x="429.5" y="4.3" width="1" height="1" fill="#62676f"/><rect x="435.5" y="3" width="1" height="3.5" fill="#62676f"/><rect x="440.5" y="4.3" width="1" height="1" fill="#62676f"/><rect x="451.5" y="4.3" width="1" height="1" fill="#62676f"/><rect x="457.5" y="3" width="1" height="3.5" fill="#62676f"/><rect x="95.5" y="10.3" width="1" height="2" fill="#5a5f66"/><rect x="123.5" y="10.3" width="1" height="2" fill="#5a5f66"/><rect x="150.5" y="10.3" width="1" height="2" fill="#5a5f66"/><rect x="178.5" y="10.3" width="1" height="2" fill="#5a5f66"/><rect x="206.5" y="10.3" width="1" height="2" fill="#5a5f66"/><rect x="234.5" y="10.3" width="1" height="2" fill="#5a5f66"/><rect x="262.5" y="10.3" width="1" height="2" fill="#5a5f66"/><rect x="290.5" y="10.3" width="1" height="2" fill="#5a5f66"/><rect x="318.5" y="10.3" width="1" height="2" fill="#5a5f66"/><rect x="346.5" y="10.3" width="1" height="2" fill="#5a5f66"/><rect x="374.5" y="10.3" width="1" height="2" fill="#5a5f66"/><rect x="401.5" y="10.3" width="1" height="2" fill="#5a5f66"/><rect x="429.5" y="10.3" width="1" height="2" fill="#5a5f66"/></svg>
<div class="a rn" style="left:344px;top:106px;width:3.2px;overflow:hidden;text-align:left;text-indent:-2px">3</div>
<div class="a rn" style="left:359.6px;top:105.7px;width:12px">2</div>
<div class="a rn" style="left:381.9px;top:105.7px;width:12px">1</div>
<div class="a rn" style="left:426.5px;top:105.7px;width:12px">1</div>
<div class="a rn" style="left:448.8px;top:105.7px;width:12px">2</div>
<div class="a rn" style="left:471.1px;top:105.7px;width:12px">3</div>
<div class="a rn" style="left:493.4px;top:105.7px;width:12px">4</div>
<div class="a rn" style="left:515.7px;top:105.7px;width:12px">5</div>
<div class="a rn" style="left:538.0px;top:105.7px;width:12px">6</div>
<div class="a rn" style="left:560.3px;top:105.7px;width:12px">7</div>
<div class="a rn" style="left:582.6px;top:105.7px;width:12px">8</div>
<div class="a rn" style="left:604.9px;top:105.7px;width:12px">9</div>
<div class="a rn" style="left:627.2px;top:105.7px;width:12px">10</div>
<div class="a rn" style="left:649.5px;top:105.7px;width:12px">11</div>
<div class="a rn" style="left:671.8px;top:105.7px;width:12px">12</div>
<div class="a rn" style="left:694.1px;top:105.7px;width:12px">13</div>
<div class="a rn" style="left:716.4px;top:105.7px;width:12px">14</div>
<div class="a rn" style="left:738.7px;top:105.7px;width:12px">15</div>
<div class="a rn" style="left:761.0px;top:105.7px;width:12px">16</div>
<div class="a rn" style="left:783.3px;top:105.7px;width:12px">17</div>
<svg class="a" style="left:405px;top:101px" width="40" height="17" viewBox="0 0 40 17">
<path d="M29.5 2.5H35.5V4.5L32.5 7.5L29.5 4.5Z" fill="#f4f5f7" stroke="#7d838c" stroke-width="0.8"/>
<path d="M2.5 13V10.5L5.5 7.5L8.5 10.5V13Z" fill="#f4f5f7" stroke="#7d838c" stroke-width="0.8"/>
<rect x="2.5" y="13" width="6" height="3.5" fill="#f4f5f7" stroke="#7d838c" stroke-width="0.8"/>
</svg>
<svg class="a" style="left:774px;top:107px" width="10" height="8" viewBox="0 0 10 8"><path d="M1.5 7V4.5L4.5 1.5L7.5 4.5V7Z" fill="#f4f5f7" stroke="#7d838c" stroke-width="0.8"/></svg>
<!-- PAGE -->
<div class="a psl"></div><div class="a psr"></div><div class="a" id="page"></div>
<div class="a dl" style="left:439.0px;top:133.5px;letter-spacing:0.145px">План</div>
<div class="a dl dd" style="left:439px;top:152.5px;width:339.8px"><span>Введение</span><span class="dots">......................................................................................................................................................</span><span>3</span></div>
<div class="a dl" style="left:439.0px;top:171.5px;letter-spacing:0.150px">1. История крещения Руси</div>
<div class="a dl dd" style="left:450.5px;top:190.5px;width:328.3px"><span>1.1. Политический фон крещения Руси</span><span class="dots">......................................................................................................................................................</span><span>4</span></div>
<div class="a dl dd" style="left:450.5px;top:209.5px;width:328.3px"><span>1.2. Духовные искания Владимира и выбор веры</span><span class="dots">......................................................................................................................................................</span><span>6</span></div>
<div class="a dl dd" style="left:450.5px;top:228.5px;width:328.3px"><span>1.3. Причины принятия христианства</span><span class="dots">......................................................................................................................................................</span><span>8</span></div>
<div class="a dl dj" style="left:439px;top:247.5px;width:339.8px">2. Значение принятия христианства и православия и их влияние на</div>
<div class="a dl" style="left:410.9px;top:266.5px;letter-spacing:0.124px">дальнейшее развитие России</div>
<div class="a dl dj" style="left:450.5px;top:285.5px;width:328.3px">2.1. Изменения в личности Владимира и на Руси после креще-</div>
<div class="a dl dd" style="left:411px;top:304.5px;width:367.8px"><span>ния</span><span class="dots">......................................................................................................................................................</span><span>10</span></div>
<div class="a dl dd" style="left:450.5px;top:323.5px;width:328.3px"><span>2.2. Последствия христианизации</span><span class="dots">......................................................................................................................................................</span><span>14</span></div>
<div class="a dl dd" style="left:450.5px;top:342.5px;width:328.3px"><span>2.3. Значение принятие христианства</span><span class="dots">......................................................................................................................................................</span><span>16</span></div>
<div class="a dl" style="left:439.0px;top:361.5px;letter-spacing:0.180px">3. Особенности русского православия</div>
<div class="a dl dd" style="left:450.5px;top:380.5px;width:328.3px"><span>3.1. Особенности православия</span><span class="dots">......................................................................................................................................................</span><span>18</span></div>
<div class="a dl dd" style="left:450.5px;top:399.5px;width:328.3px"><span>3.2. Основные вероучения православия</span><span class="dots">......................................................................................................................................................</span><span>19</span></div>
<div class="a dl dd" style="left:450.5px;top:418.5px;width:328.3px"><span>3.3. Русская православная церковь в современных условиях</span><span class="dots">......................................................................................................................................................</span><span>20</span></div>
<div class="a dl dd" style="left:439px;top:437.5px;width:339.8px"><span>Заключение</span><span class="dots">......................................................................................................................................................</span><span>22</span></div>
<div class="a dl dd" style="left:439px;top:456.5px;width:339.8px"><span>Список литературы</span><span class="dots">......................................................................................................................................................</span><span>24</span></div>
<div class="a" style="left:438.8px;top:517.6px;width:1.7px;height:1.5px;background:#222;border-radius:1px"></div>
<!-- V SCROLLBAR -->
<div class="a" style="left:987px;top:101px;width:13px;height:418px;background:#dadde1"></div>
<div class="a" style="left:990px;top:103px;width:7px;height:1.5px;background:#555"></div>
<div class="a" style="left:987.5px;top:106.5px;width:12px;height:11.5px;background:#eef0f3;border:1px solid #8c929b;border-radius:1px"></div>
<svg class="a" style="left:989px;top:108px" width="9" height="9" viewBox="0 0 9 9"><rect x="1" y="1" width="5" height="4" fill="#fff" stroke="#b08a8a" stroke-width="0.6"/><rect x="3" y="3.5" width="5" height="4" fill="#fff" stroke="#b08a8a" stroke-width="0.6"/></svg>
<div class="a" style="left:987.5px;top:119.5px;width:12px;height:11.5px;background:#fbfbfc;border:1px solid #c3c8cf;border-radius:1px"></div>
<div class="a" style="left:990px;top:123.5px;width:0;height:0;border-left:3.5px solid transparent;border-right:3.5px solid transparent;border-bottom:3.5px solid #333"></div>
<div class="a" style="left:987.5px;top:132.5px;width:12px;height:12.5px;background:linear-gradient(90deg,#eef0f3,#e2e5e9);border:1px solid #a9afb8;border-radius:1px"></div>
<div class="a" style="left:990.5px;top:137px;width:6px;height:1px;background:#b6bac0"></div>
<div class="a" style="left:990.5px;top:139.5px;width:6px;height:1px;background:#b6bac0"></div>
<div class="a" style="left:987.5px;top:470px;width:12px;height:11.5px;background:#fbfbfc;border:1px solid #c3c8cf;border-radius:1px"></div>
<div class="a" style="left:990px;top:474.5px;width:0;height:0;border-left:3.5px solid transparent;border-right:3.5px solid transparent;border-top:3.5px solid #333"></div>
<svg class="a" style="left:990px;top:485px" width="7" height="32" viewBox="0 0 7 32"><path d="M3.5 1L1 3.5H6Z M3.5 4L1 6.5H6Z" fill="#2f66d0"/><circle cx="3.5" cy="14.8" r="2.2" fill="none" stroke="#777" stroke-width="0.8"/><path d="M3.5 30L1 27.5H6Z M3.5 27L1 24.5H6Z" fill="#2f66d0"/></svg>
<!-- STATUS -->
<div class="a" id="status"></div>
<div class="a st" style="left:6.2px;top:523px;letter-spacing:-0.182px">Страница: 1 из 23</div>
<div class="a ssep" style="left:81.5px"></div>
<div class="a st" style="left:89.4px;top:523px;letter-spacing:-0.291px">Число слов: 4 670</div>
<div class="a ssep" style="left:163.5px"></div>
<svg class="a" style="left:170px;top:521px" width="13" height="12" viewBox="0 0 13 12"><path d="M1.5 4.5L7 2L11.5 4.5L6 7.5Z" fill="#eef1f6" stroke="#5a78ad" stroke-width="0.8"/><path d="M1.5 4.5V7L6 10V7.5" fill="#c9d4e8" stroke="#5a78ad" stroke-width="0.7"/><path d="M6 7.5L11.5 4.5V7L6 10Z" fill="#dfe6f2" stroke="#5a78ad" stroke-width="0.7"/><path d="M6.5 1L10.5 5M10.5 1L6.5 5" stroke="#d03030" stroke-width="1.1"/></svg>
<div class="a st" style="left:194.0px;top:523px;letter-spacing:-0.049px">русский</div>
<div class="a ssep" style="left:231px"></div>
<!-- view buttons -->
<div class="a ssep" style="left:800.5px"></div>
<div class="a" style="left:804px;top:521px;width:13.5px;height:13px;background:linear-gradient(#fde59a,#fbcf55);border:1.3px solid #e2a524;border-radius:2px"></div>
<svg class="a" style="left:806px;top:523px" width="72" height="9" viewBox="0 0 72 9">
<rect x="0.5" y="0.8" width="8.5" height="7.4" fill="#fdf3cf" stroke="#5f5f5f" stroke-width="0.9"/><path d="M1.5 3.2H8M1.5 5.8H8" stroke="#5a5a5a" stroke-width="0.9"/>
<path d="M14 1.5C16 0.8 17.5 1 18.5 2V8.5C17.5 7.6 16 7.5 14 8Z M23 1.5C21 0.8 19.5 1 18.5 2V8.5C19.5 7.6 21 7.5 23 8Z" fill="#f4f5f7" stroke="#7b8088" stroke-width="0.7"/>
<rect x="27.5" y="1" width="8" height="6.5" fill="#f4f5f7" stroke="#7b8088" stroke-width="0.7"/><rect x="27.5" y="1" width="8" height="1.5" fill="#8a9099"/><circle cx="35" cy="7" r="2" fill="#3a8ad0"/>
<path d="M42 1.5H49M44 3.8H49M44 6H49M42 8H49" stroke="#8a8f97" stroke-width="0.9"/>
<path d="M55.5 1.5H63M55.5 3.7H63M55.5 5.9H63M55.5 8H63" stroke="#777c84" stroke-width="0.9"/>
</svg>
<div class="a st" style="left:878.5px;top:523px;letter-spacing:-0.568px">80%</div>
<svg class="a" style="left:899px;top:521px" width="100" height="14" viewBox="0 0 100 14">
<path d="M12 6.7H87" stroke="#a9aeb5" stroke-width="0.8"/><path d="M12 7.5H87" stroke="#eceef1" stroke-width="0.8"/>
<path d="M49 4V10" stroke="#8e949c" stroke-width="0.8"/>
<circle cx="6.7" cy="6.8" r="5.2" fill="#f7f8fa" stroke="#7d838c" stroke-width="0.9"/><path d="M3.8 6.8H9.6" stroke="#444" stroke-width="1.2"/>
<circle cx="92" cy="6.8" r="5.2" fill="#f7f8fa" stroke="#7d838c" stroke-width="0.9"/><path d="M89.1 6.8H94.9M92 3.9V9.7" stroke="#444" stroke-width="1.2"/>
<path d="M40 2.5H45V8L42.5 10.8L40 8Z" fill="#f7f8fa" stroke="#6d737c" stroke-width="0.8"/>
</svg>
<!-- TASKBAR -->
<div class="a" id="taskbar"></div>
<div class="a" style="left:36px;top:535.5px;width:252px;height:29.5px;background:#fefefe"></div>
<svg class="a" style="left:11px;top:544.5px" width="13" height="12" viewBox="0 0 13 12"><path d="M0 1.7L5.3 1V5.6H0Z M6 0.9L13 0V5.6H6Z M0 6.3H5.3V11L0 10.3Z M6 6.3H13V12L6 11.1Z" fill="#1f1f1f"/></svg>
<svg class="a" style="left:44px;top:545px" width="12" height="12" viewBox="0 0 12 12"><circle cx="7" cy="4.8" r="3.7" fill="none" stroke="#222" stroke-width="1"/><path d="M4.3 7.5L0.8 11.2" stroke="#222" stroke-width="1.1"/></svg>
<div class="a" style="left:64.0px;top:545px;font-size:11.2px;color:#444;letter-spacing:-0.210px">Введите здесь текст для поиска</div>
<svg class="a" style="left:299px;top:544px" width="14" height="12" viewBox="0 0 14 12"><rect x="2.5" y="2.5" width="6" height="7" fill="none" stroke="#1a1a1a" stroke-width="1.3"/><path d="M0.6 0.8V2.5M0.6 9.5V11.2M10.4 0.8V2.5M10.4 9.5V11.2M0 2.5H11M0 9.5H11" stroke="#1a1a1a" stroke-width="1.3" fill="none"/><path d="M12.7 1V3.8M12.7 5.2V11" stroke="#1a1a1a" stroke-width="1.2"/></svg>
<!-- chrome -->
<svg class="a" style="left:335px;top:542px" width="17" height="17" viewBox="0 0 17 17"><circle cx="8.5" cy="8.5" r="8.3" fill="#db4437"/><path d="M8.5 8.5L1.3 4.4A8.3 8.3 0 0 0 7 16.65Z" fill="#0f9d58"/><path d="M8.5 8.5L7 16.65A8.3 8.3 0 0 0 15.7 4.4H8.5Z" fill="#ffcd40"/><path d="M8.5 8.5L4.9 10.6L1.3 4.4" fill="#0f9d58"/><circle cx="8.5" cy="8.5" r="3.9" fill="#f1f1f1"/><circle cx="8.5" cy="8.5" r="3.1" fill="#4285f4"/></svg>
<!-- explorer -->
<svg class="a" style="left:371px;top:543px" width="17" height="14" viewBox="0 0 17 14"><path d="M0.5 1.5H6L7.5 3H16.5V13.5H0.5Z" fill="#f5b93c"/><path d="M0.5 4.5H16.5V13.5H0.5Z" fill="#fbd465"/><path d="M4 9H13V13.5H4Z" fill="#2f8de0"/><path d="M6.5 11H10.5V13.5H6.5Z" fill="#fbd465"/></svg>
<!-- word -->
<div class="a" style="left:398px;top:535.5px;width:33.5px;height:29.5px;background:#f9f3ee"></div>
<svg class="a" style="left:406px;top:541.5px" width="18" height="17" viewBox="0 0 18 17"><rect x="5" y="1" width="12" height="14" fill="#fdfdfe" stroke="#9fb4d6" stroke-width="0.8"/><path d="M8 4H15.5M8 6.5H15.5M8 9H15.5M8 11.5H15.5" stroke="#c8d4e8" stroke-width="0.8"/><rect x="0.5" y="2.5" width="12.5" height="11.5" rx="1" fill="#2b5fb4" stroke="#1c468f" stroke-width="0.6"/><text x="1.6" y="12" font-size="10.5" font-weight="bold" font-family="Liberation Sans, sans-serif" fill="#fff">W</text></svg>
<!-- acrobat -->
<svg class="a" style="left:443.5px;top:542px" width="16" height="16" viewBox="0 0 16 16"><rect x="0" y="0" width="16" height="16" rx="3" fill="#b80f14"/><path d="M3 12.5C5.5 10.5 7.5 6.5 7.8 3.2C8.2 6.5 10 9.5 13.5 10.2C10 10 6 11 3 12.5Z" fill="none" stroke="#fff" stroke-width="1.1" stroke-linejoin="round"/></svg>
<div class="a tu" style="left:329px;width:28.5px"></div>
<div class="a tu" style="left:365px;width:28.5px"></div>
<div class="a tu" style="left:398px;width:34.5px"></div>
<div class="a tu" style="left:437px;width:29px"></div>
<!-- weather -->
<div class="a" style="left:717px;top:544px;width:13px;height:13px;border-radius:50%;background:radial-gradient(circle at 40% 35%,#ffc83a,#f59a1c 75%,#ef8a1a)"></div>
<div class="a" style="left:738.4px;top:545px;font-size:10.2px;color:#222;letter-spacing:-0.503px">1°C</div>
<div class="a" style="left:761.0px;top:545px;font-size:10.2px;color:#222;letter-spacing:0.013px">Солнечно</div>
<!-- tray -->
<svg class="a" style="left:819px;top:545.5px" width="10" height="8" viewBox="0 0 10 8"><path d="M1 6.5L5 2L9 6.5" fill="none" stroke="#222" stroke-width="1.1"/></svg>
<svg class="a" style="left:836px;top:546px" width="13" height="9" viewBox="0 0 13 9"><rect x="3.4" y="2.6" width="7.6" height="4.3" fill="#2a2a2a" stroke="#222" stroke-width="0.8"/><rect x="11.3" y="3.8" width="0.9" height="2" fill="#222"/><circle cx="1.6" cy="2" r="0.9" fill="none" stroke="#222" stroke-width="0.7"/><path d="M1.6 2.9V7H3.4" stroke="#222" stroke-width="0.8" fill="none"/></svg>
<svg class="a" style="left:853.5px;top:545px" width="14" height="11" viewBox="0 0 14 11"><path d="M0.7 3.9H2.6L5 1.6V9.4L2.6 7.1H0.7Z" fill="none" stroke="#222" stroke-width="0.85"/><path d="M6.8 4C7.6 4.9 7.6 6.1 6.8 7" fill="none" stroke="#333" stroke-width="0.8"/><path d="M8.6 2.6C10 4.2 10 6.8 8.6 8.4" fill="none" stroke="#999" stroke-width="0.7"/><path d="M10.4 1.2C12.4 3.6 12.4 7.4 10.4 9.8" fill="none" stroke="#c4c0bc" stroke-width="0.7"/></svg>
<svg class="a" style="left:871px;top:545.5px" width="13" height="11" viewBox="0 0 13 11"><rect x="3.6" y="1.5" width="8.4" height="5.8" fill="none" stroke="#222" stroke-width="0.85"/><path d="M6.2 9.6H9.6M7.9 7.3V9.6" stroke="#222" stroke-width="0.85"/><rect x="0.4" y="1" width="2.4" height="2.2" fill="none" stroke="#222" stroke-width="0.7"/><path d="M1.6 3.2V9.3H4.4" fill="none" stroke="#222" stroke-width="0.8"/></svg>
<div class="a" style="left:892.0px;top:545.5px;font-size:8.6px;color:#222;letter-spacing:-0.740px">РУС</div>
<div class="a" style="left:927.0px;top:539.5px;font-size:8.6px;color:#222;letter-spacing:-0.383px">16:25</div>
<div class="a" style="left:917.5px;top:552px;font-size:8.6px;color:#222;letter-spacing:-0.338px">03.11.2021</div>
<svg class="a" style="left:970px;top:544px" width="13" height="13" viewBox="0 0 13 13"><path d="M0.7 0.7H11.7V8.8H7.5L5.5 11.3V8.8H0.7Z" fill="none" stroke="#222" stroke-width="1"/></svg>
<div class="a" style="left:996px;top:535.5px;width:1px;height:29.5px;background:#b9b1aa"></div>
</body>
</html>
